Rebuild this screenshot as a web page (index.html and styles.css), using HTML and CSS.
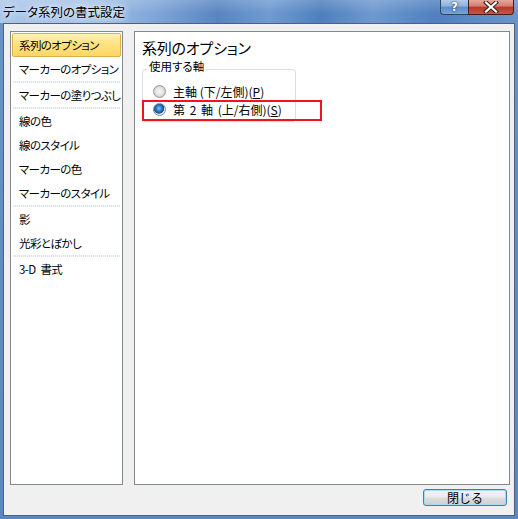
FILE: index.html
```html
<!DOCTYPE html>
<html lang="ja">
<head>
<meta charset="utf-8">
<title>データ系列の書式設定</title>
<link rel="stylesheet" href="styles.css">
</head>
<body>
<div class="window">
  <div class="titlebar">
    <span class="title">データ系列の書式設定</span>
    <div class="caption-buttons">
      <span class="btn-help">?</span>
      <span class="btn-close">
        <svg width="16" height="12" viewBox="0 0 16 12">
          <path d="M3 1.5 L13 10.5 M13 1.5 L3 10.5" stroke="#3a2020" stroke-width="4.2" stroke-linecap="square" fill="none"/>
          <path d="M3 1.5 L13 10.5 M13 1.5 L3 10.5" stroke="#ffffff" stroke-width="2.2" stroke-linecap="square" fill="none"/>
        </svg>
      </span>
    </div>
  </div>
  <div class="client">
    <div class="panels">
      <ul class="nav">
        <li class="item sel">系列のオプション</li>
        <li class="item">マーカーのオプション</li>
        <li class="sep"></li>
        <li class="item">マーカーの塗りつぶし</li>
        <li class="sep"></li>
        <li class="item">線の色</li>
        <li class="item">線のスタイル</li>
        <li class="item">マーカーの色</li>
        <li class="item">マーカーのスタイル</li>
        <li class="sep"></li>
        <li class="item">影</li>
        <li class="item">光彩とぼかし</li>
        <li class="sep"></li>
        <li class="item">3-D 書式</li>
      </ul>
      <div class="pane">
        <h2 class="pane-title">系列のオプション</h2>
        <fieldset class="group">
          <legend class="group-label">使用する軸</legend>
          <label class="radio"><span class="radio-dot"></span><span>主軸 (下/左側)(<u>P</u>)</span></label>
          <label class="radio"><span class="radio-dot checked"></span><span class="wide">第 2 軸 (上/右側)(<u>S</u>)</span></label>
        </fieldset>
        <div class="annotation"></div>
      </div>
    </div>
    <div class="footer">
      <button class="close-button">閉じる</button>
    </div>
  </div>
</div>
</body>
</html>
```
FILE: styles.css
```css
html, body {
  margin: 0;
  padding: 0;
  font-family: "Noto Sans CJK JP", "Noto Sans", sans-serif;
}

.window {
  width: 518px;
  height: 519px;
  box-sizing: border-box;
  padding-bottom: 3px;
  display: flex;
  flex-direction: column;
  overflow: hidden;
  background: linear-gradient(to bottom, #6a95cb 0%, #5e8cc6 50%, #5a88c2 100%);
}

.titlebar {
  height: 23px;
  flex: none;
  display: flex;
  justify-content: space-between;
  align-items: flex-start;
  padding: 0 4px 0 3px;
  background:
    linear-gradient(to bottom, rgba(255,255,255,0.18), rgba(255,255,255,0) 60%),
    linear-gradient(to right, #a9c5e8 0%, #a0bfe6 18%, #7fa6d8 30%, #5885c1 42%, #6f9bd1 52%, #4e7fbd 62%, #6e99cf 72%, #4f80bf 84%, #6a95cb 100%);
}

.title {
  font-size: 12.5px;
  line-height: 24px;
  color: #000;
  font-feature-settings: "palt";
  text-shadow: 0 0 4px #dbe8f6, 0 0 8px #e4eef9, 0 0 10px #e4eef9;
}

.caption-buttons {
  display: flex;
}

.btn-help {
  width: 28px;
  height: 15px;
  box-sizing: border-box;
  border: 1px solid #2d4664;
  border-top: none;
  border-right: none;
  border-radius: 0 0 0 4px;
  background: linear-gradient(to bottom, #b2cbea 0%, #8cafdb 45%, #5f8bc5 50%, #7aa3d6 100%);
  color: #fff;
  font-family: "DejaVu Sans", sans-serif;
  font-weight: bold;
  font-size: 12px;
  line-height: 14px;
  text-align: center;
  text-shadow: 0 0 2px #1d3552, 0 0 1px #1d3552;
}

.btn-close {
  width: 46px;
  height: 15px;
  box-sizing: border-box;
  border: 1px solid #4a1d1d;
  border-top: none;
  border-radius: 0 0 4px 0;
  background: linear-gradient(to bottom, #e5a99d 0%, #d47a6a 45%, #b9372a 50%, #c65646 100%);
  display: flex;
  align-items: center;
  justify-content: center;
}

.client {
  flex: 1;
  margin: 0 3px;
  border: 1px solid #4d6279;
  background: #f0f0f0;
  display: flex;
  flex-direction: column;
  padding: 7px 4px 0 6px;
}

.panels {
  display: flex;
  gap: 11px;
  height: 454px;
  flex: none;
}

.nav {
  width: 113px;
  box-sizing: border-box;
  margin: 0;
  padding: 1px;
  list-style: none;
  background: #fff;
  border: 1px solid #828790;
}

.item {
  height: 24px;
  box-sizing: border-box;
  border: 1px solid transparent;
  border-radius: 2px;
  padding-left: 6px;
  font-size: 11.5px;
  letter-spacing: -0.6px;
  word-spacing: 3px;
  line-height: 22px;
  color: #000;
  white-space: nowrap;
  font-feature-settings: "palt";
}

.item.sel {
  border-color: #dcb04a;
  background: linear-gradient(to bottom, #fff2b0 0%, #fee283 45%, #fdd763 100%);
}

.sep {
  height: 2px;
  margin: 0 1px;
  background: repeating-linear-gradient(to right, #dde2e8 0 1px, #f4f6f8 1px 2px);
}

.pane {
  flex: 1;
  position: relative;
  box-sizing: border-box;
  border: 1px solid #828790;
  background: #fff;
  padding: 6px 7px;
}

.pane-title {
  margin: 0;
  font-size: 15px;
  letter-spacing: -0.2px;
  font-weight: normal;
  line-height: 20px;
  color: #000;
  font-feature-settings: "palt";
}

.group {
  width: 154px;
  box-sizing: border-box;
  margin: 0;
  padding: 0 0 3px 4px;
  border: 1px solid #d5dfe5;
  border-radius: 3px;
}

.group-label {
  padding: 1px 2px 7px;
  font-size: 11.5px;
  line-height: 14px;
  color: #000;
  font-feature-settings: "palt";
}

.radio {
  display: flex;
  align-items: center;
  gap: 7px;
  height: 18px;
  padding-left: 6px;
  font-size: 12px;
  color: #000;
  white-space: nowrap;
}

.wide {
  word-spacing: 2px;
}

.group-label + .radio {
  margin-top: 2px;
}

.radio-dot {
  width: 13px;
  height: 13px;
  box-sizing: border-box;
  border-radius: 50%;
  border: 1px solid #9a9a9a;
  background: radial-gradient(circle at 50% 50%, #f6f6f6 0%, #e6e6e6 45%, #cfcfcf 70%, #f4f4f4 100%);
  flex: none;
}

.radio-dot.checked {
  border-color: #7a8a9a;
  background: radial-gradient(circle at 45% 40%, #8fc6f4 0%, #2f7fd0 30%, #124c8f 55%, #dfe7ef 62%, #f3f6f9 100%);
}

.annotation {
  position: absolute;
  left: 7px;
  top: 68px;
  width: 180px;
  height: 21px;
  box-sizing: border-box;
  border: 2px solid #f0141e;
}

.footer {
  display: flex;
  justify-content: flex-end;
  padding: 4px 3px 0 0;
}

.close-button {
  width: 84px;
  height: 17px;
  box-sizing: border-box;
  padding: 0;
  border: 1px solid #3c7fb1;
  border-radius: 3px;
  background: linear-gradient(to bottom, #f2f2f2 0%, #ebebeb 48%, #dddddd 52%, #cfcfcf 100%);
  box-shadow: inset 0 0 0 1px #a7dcf4;
  font-family: "Noto Sans CJK JP", sans-serif;
  font-size: 12px;
  line-height: 14px;
  color: #000;
}
```
